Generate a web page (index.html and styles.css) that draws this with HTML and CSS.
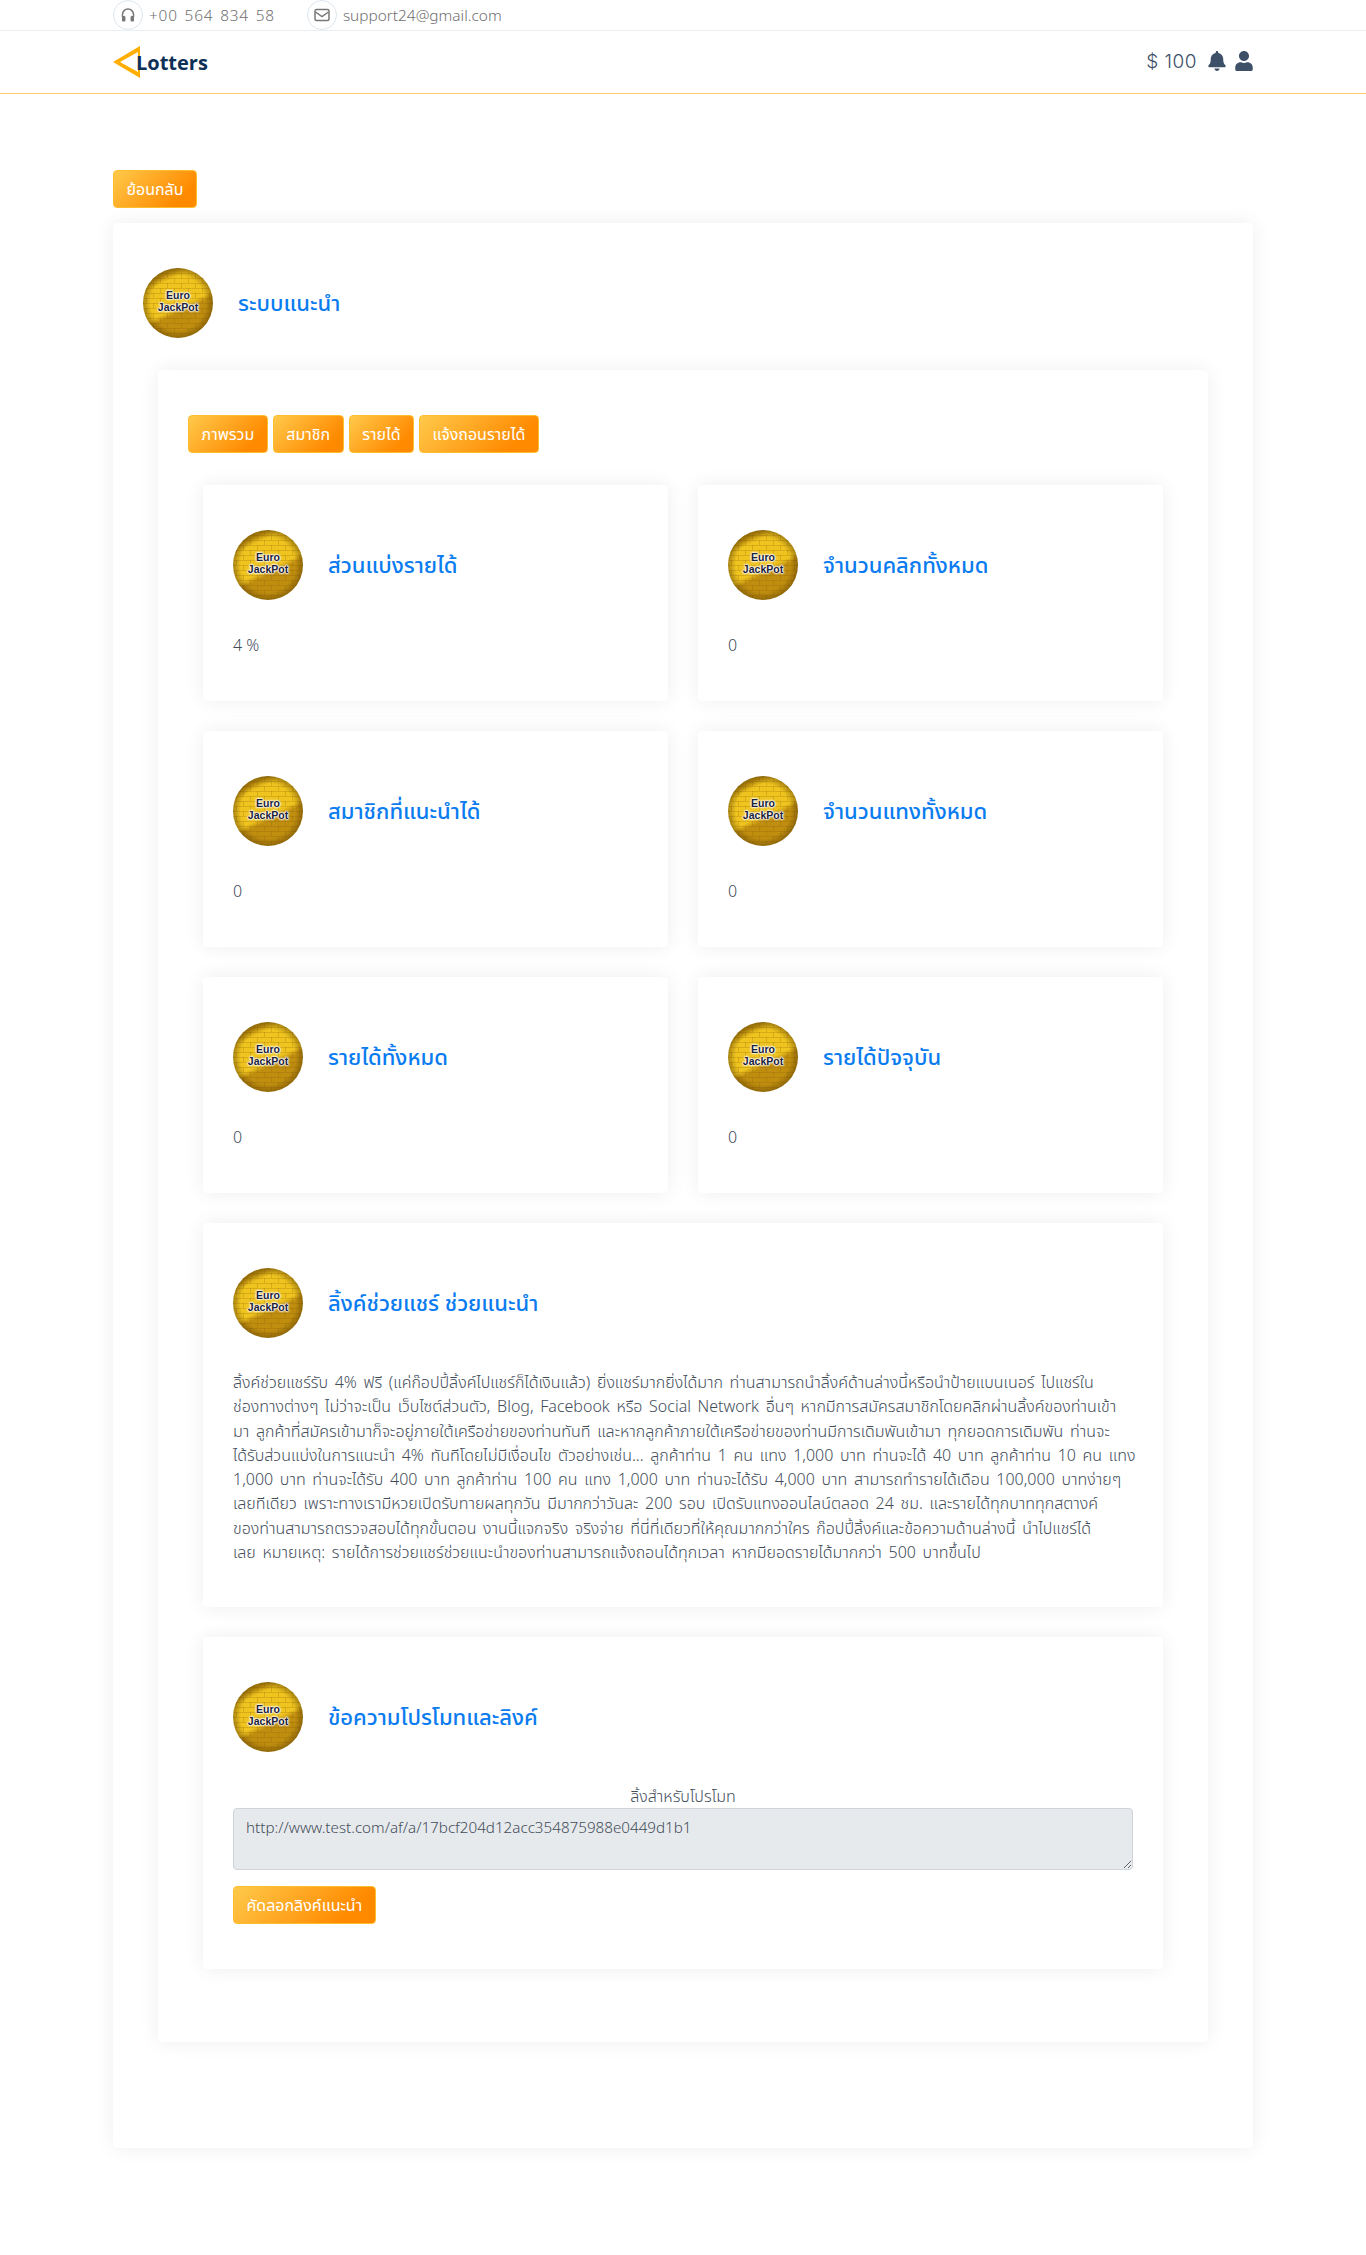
FILE: index.html
```html
<!DOCTYPE html>
<html lang="th">
<head>
  <meta charset="UTF-8">
  <meta name="viewport" content="width=device-width, initial-scale=1.0">
  <title>Lotters</title>
  <link rel="stylesheet" href="styles.css">
</head>
<body>
  <!-- Top contact bar -->
  <div class="topbar">
    <div class="container topbar-in">
      <span class="contact phone">
        <span class="contact-icon">
          <svg width="16" height="16" viewBox="0 0 16 16"><path d="M2.500 10V7.500a5.500 5.500 0 0 1 11 0V10" fill="none" stroke="#777" stroke-width="1.500"/><rect x="2" y="9" width="3.400" height="5.500" rx="1.200" fill="#777"/><rect x="10.600" y="9" width="3.400" height="5.500" rx="1.200" fill="#777"/></svg>
        </span>
        +00 564 834 58
      </span>
      <span class="contact">
        <span class="contact-icon">
          <svg width="16" height="14" viewBox="0 0 16 14"><rect x="1" y="1.500" width="14" height="11" rx="1.500" fill="none" stroke="#777" stroke-width="1.500"/><path d="M1.500 4l6.500 4.600L14.500 4" fill="none" stroke="#777" stroke-width="1.500"/></svg>
        </span>
        support24@gmail.com
      </span>
    </div>
  </div>

  <!-- Header -->
  <header class="header">
    <div class="container header-in">
      <a class="logo" href="#">
        <svg class="logo-mark" width="27" height="32" viewBox="0 0 27 32"><path d="M27 0L0 16 27 32zM25 6L7 16 25 26z" fill="#ffae00" fill-rule="evenodd"/></svg>
        <span class="logo-text">Lotters</span>
      </a>
      <div class="header-right">
        <span class="balance">$ 100</span>
        <svg width="18" height="20" viewBox="0 0 448 512"><path fill="#3d5068" d="M224 512c35.32 0 63.97-28.65 63.97-64H160.03c0 35.35 28.65 64 63.97 64zm215.39-149.71c-19.32-20.76-55.47-51.99-55.47-154.29 0-77.7-54.48-139.9-127.94-155.16V32c0-17.67-14.32-32-31.98-32s-31.98 14.33-31.98 32v20.84C118.56 68.1 64.08 130.3 64.08 208c0 102.3-36.15 133.53-55.47 154.29-6 6.45-8.66 14.16-8.61 21.71.11 16.4 12.98 32 32.1 32h383.8c19.12 0 32-15.6 32.1-32 .05-7.55-2.61-15.27-8.61-21.71z"/></svg>
        <svg width="18" height="20" viewBox="0 0 448 512"><path fill="#3d5068" d="M224 256c70.7 0 128-57.3 128-128S294.7 0 224 0 96 57.3 96 128s57.3 128 128 128zm89.6 32h-16.7c-22.2 10.2-46.9 16-72.9 16s-50.6-5.8-72.9-16h-16.7C60.2 288 0 348.2 0 422.4V464c0 26.5 21.5 48 48 48h352c26.5 0 48-21.5 48-48v-41.6c0-74.2-60.2-134.4-134.4-134.4z"/></svg>
      </div>
    </div>
  </header>

  <main class="container main">
    <a class="btn" href="#">ย้อนกลับ</a>

    <section class="card outer">
      <div class="card-head outer-head">
        <div class="coin"><span>Euro<br>JackPot</span></div>
        <h2>ระบบแนะนำ</h2>
      </div>

      <div class="card inner">
        <div class="tabs">
          <a class="btn" href="#">ภาพรวม</a>
          <a class="btn" href="#">สมาชิก</a>
          <a class="btn" href="#">รายได้</a>
          <a class="btn" href="#">แจ้งถอนรายได้</a>
        </div>

        <div class="stats">
          <div class="card stat">
            <div class="card-head"><div class="coin"><span>Euro<br>JackPot</span></div><h2>ส่วนแบ่งรายได้</h2></div>
            <p>4 %</p>
          </div>
          <div class="card stat">
            <div class="card-head"><div class="coin"><span>Euro<br>JackPot</span></div><h2>จำนวนคลิกทั้งหมด</h2></div>
            <p>0</p>
          </div>
          <div class="card stat">
            <div class="card-head"><div class="coin"><span>Euro<br>JackPot</span></div><h2>สมาชิกที่แนะนำได้</h2></div>
            <p>0</p>
          </div>
          <div class="card stat">
            <div class="card-head"><div class="coin"><span>Euro<br>JackPot</span></div><h2>จำนวนแทงทั้งหมด</h2></div>
            <p>0</p>
          </div>
          <div class="card stat">
            <div class="card-head"><div class="coin"><span>Euro<br>JackPot</span></div><h2>รายได้ทั้งหมด</h2></div>
            <p>0</p>
          </div>
          <div class="card stat">
            <div class="card-head"><div class="coin"><span>Euro<br>JackPot</span></div><h2>รายได้ปัจจุบัน</h2></div>
            <p>0</p>
          </div>
        </div>

        <div class="card wide share">
          <div class="card-head"><div class="coin"><span>Euro<br>JackPot</span></div><h2>ลิ้งค์ช่วยแชร์ ช่วยแนะนำ</h2></div>
          <p class="share-text">ลิ้งค์ช่วยแชร์รับ 4% ฟรี (แค่ก๊อปปี้ลิ้งค์ไปแชร์ก็ได้เงินแล้ว) ยิ่งแชร์มากยิ่งได้มาก ท่านสามารถนำลิ้งค์ด้านล่างนี้หรือนำป้ายแบนเนอร์ ไปแชร์ใน<br>
ช่องทางต่างๆ ไม่ว่าจะเป็น เว็บไซต์ส่วนตัว, Blog, Facebook หรือ Social Network อื่นๆ หากมีการสมัครสมาชิกโดยคลิกผ่านลิ้งค์ของท่านเข้า<br>
มา ลูกค้าที่สมัครเข้ามาก็จะอยู่ภายใต้เครือข่ายของท่านทันที และหากลูกค้าภายใต้เครือข่ายของท่านมีการเดิมพันเข้ามา ทุกยอดการเดิมพัน ท่านจะ<br>
ได้รับส่วนแบ่งในการแนะนำ 4% ทันทีโดยไม่มีเงื่อนไข ตัวอย่างเช่น... ลูกค้าท่าน 1 คน แทง 1,000 บาท ท่านจะได้ 40 บาท ลูกค้าท่าน 10 คน แทง<br>
1,000 บาท ท่านจะได้รับ 400 บาท ลูกค้าท่าน 100 คน แทง 1,000 บาท ท่านจะได้รับ 4,000 บาท สามารถทำรายได้เดือน 100,000 บาทง่ายๆ<br>
เลยทีเดียว เพราะทางเรามีหวยเปิดรับทายผลทุกวัน มีมากกว่าวันละ 200 รอบ เปิดรับแทงออนไลน์ตลอด 24 ชม. และรายได้ทุกบาททุกสตางค์<br>
ของท่านสามารถตรวจสอบได้ทุกขั้นตอน งานนี้แจกจริง จริงจ่าย ที่นี่ที่เดียวที่ให้คุณมากกว่าใคร ก๊อปปี้ลิ้งค์และข้อความด้านล่างนี้ นำไปแชร์ได้<br>
เลย หมายเหตุ: รายได้การช่วยแชร์ช่วยแนะนำของท่านสามารถแจ้งถอนได้ทุกเวลา หากมียอดรายได้มากกว่า 500 บาทขึ้นไป</p>
        </div>

        <div class="card wide promo">
          <div class="card-head"><div class="coin"><span>Euro<br>JackPot</span></div><h2>ข้อความโปรโมทและลิงค์</h2></div>
          <label class="promo-label" for="link">ลิ้งสำหรับโปรโมท</label>
          <textarea id="link" class="promo-link" readonly>http://www.test.com/af/a/17bcf204d12acc354875988e0449d1b1</textarea>
          <a class="btn" href="#">คัดลอกลิงค์แนะนำ</a>
        </div>
      </div>
    </section>
  </main>
</body>
</html>
```

FILE: styles.css
```css
html {
	background-color: #fff;
}

body {
	margin: 0;
	padding: 0;
	min-height: 2255px;
	font-family: "Noto Sans", "Noto Sans Thai", "Open Sans", sans-serif;
	font-size: 16px;
	font-weight: 300;
	color: #434d5a;
}

.container {
	width: 1140px;
	margin: 0 auto;
}

/* top bar */
.topbar {
	height: 30px;
	border-bottom: 1px solid #e9eef3;
}
.topbar-in {
	display: flex;
	gap: 32px;
}
.contact {
	display: flex;
	align-items: center;
	gap: 6px;
	height: 30px;
	font-size: 15.400px;
	color: #6f6f6f;
}
.phone {
	letter-spacing: 0.800px;
	word-spacing: 2px;
}
.contact-icon {
	display: flex;
	align-items: center;
	justify-content: center;
	width: 28px;
	height: 28px;
	border: 1px solid #dde5ee;
	border-radius: 50%;
}

/* header */
.header {
	height: 62px;
	border-bottom: 1px solid #ffcf70;
}
.header-in {
	display: flex;
	align-items: center;
	justify-content: space-between;
	height: 60px;
}
.logo {
	display: flex;
	align-items: center;
	margin-top: 1px;
	text-decoration: none;
}
.logo-text {
	margin-top: 2px;
	margin-left: -4px;
	font-family: "Open Sans", sans-serif;
	font-size: 20px;
	font-weight: 700;
	color: #0e2f56;
}
.header-right {
	display: flex;
	align-items: center;
	gap: 9px;
}
.balance {
	margin-right: 2px;
	font-family: "Inter", sans-serif;
	font-size: 19px;
	font-weight: 300;
	letter-spacing: 0.500px;
	color: #3d5068;
}

/* main */
.main {
	padding-top: 76px;
}
.btn {
	display: inline-block;
	box-sizing: border-box;
	height: 38px;
	padding: 0 12.500px;
	line-height: 36px;
	font-size: 16px;
	font-weight: 400;
	color: #fff;
	text-decoration: none;
	background: linear-gradient(135deg, #ffc94a 0%, #ff8a00 80%);
	border: 1px solid #ffbe2e;
	border-radius: 4px;
}

.card {
	box-sizing: border-box;
	background: #fff;
	border-radius: 4px;
	box-shadow: 0 0 20px rgba(0, 0, 0, 0.07);
}
.card-head {
	display: flex;
	align-items: center;
	gap: 25px;
}
h2 {
	margin: 0;
	padding-top: 1px;
	font-size: 22px;
	font-weight: 500;
	color: #0a7cf0;
}

.coin {
	display: flex;
	flex: none;
	align-items: center;
	justify-content: center;
	width: 70px;
	height: 70px;
	border-radius: 50%;
	background:
		radial-gradient(circle, transparent 55%, rgba(90, 60, 0, 0.5) 72%),
		url("data:image/svg+xml,%3Csvg xmlns='http://www.w3.org/2000/svg' width='14' height='10'%3E%3Cpath d='M0 .5H14M0 5.500H14M3.500 0V5M10.500 5V10' stroke='%23805500' stroke-opacity='.22' fill='none'/%3E%3C/svg%3E"),
		linear-gradient(155deg, #bf900e 0 16%, #efc41f 24% 54%, #c08e0f 60% 100%);
}
.coin span {
	margin-bottom: 4px;
	padding: 0 2px;
	font-family: "Liberation Sans", sans-serif;
	font-size: 10.500px;
	font-weight: 700;
	line-height: 12px;
	text-align: center;
	color: #1c2236;
	text-shadow: 0 0 1px #fff, 0 0 2px #fff, 0 0 2px #fff, 0 0 2px #fff, 0 0 3px #fff;
}

.outer {
	margin-top: 15px;
	height: 1925px;
	padding: 45px 45px 0 45px;
}
.outer-head {
	margin-left: -15px;
}
.inner {
	height: 1672px;
	margin-top: 32px;
	padding: 45px 45px 0 30px;
	width: 1050px;
}

.tabs {
	display: flex;
	gap: 5px;
}

.stats {
	display: grid;
	grid-template-columns: 465px 465px;
	gap: 30px;
	margin-top: 32px;
	margin-left: 15px;
}
.stat {
	height: 216px;
	padding: 45px 30px 0 30px;
}
.stat p {
	margin: 33px 0 0 0;
	line-height: 24px;
}

.wide {
	width: 960px;
	margin-top: 30px;
	margin-left: 15px;
	padding: 45px 30px 0 30px;
}
.share {
	height: 384px;
}
.share-text {
	margin: 32px 0 0 0;
	line-height: 24.300px;
	word-spacing: 2.500px;
	white-space: nowrap;
}
.promo {
	height: 332px;
}
.promo-label {
	display: block;
	margin-top: 32px;
	text-align: center;
	line-height: 24px;
}
.promo-link {
	display: block;
	box-sizing: border-box;
	width: 100%;
	height: 62px;
	padding: 8px 12px;
	font-family: inherit;
	font-size: 15.200px;
	font-weight: 300;
	color: #434d5a;
	background: #e7eaed;
	border: 1px solid #ced4da;
	border-radius: 4px;
}
.promo .btn {
	margin-top: 16px;
}
```
